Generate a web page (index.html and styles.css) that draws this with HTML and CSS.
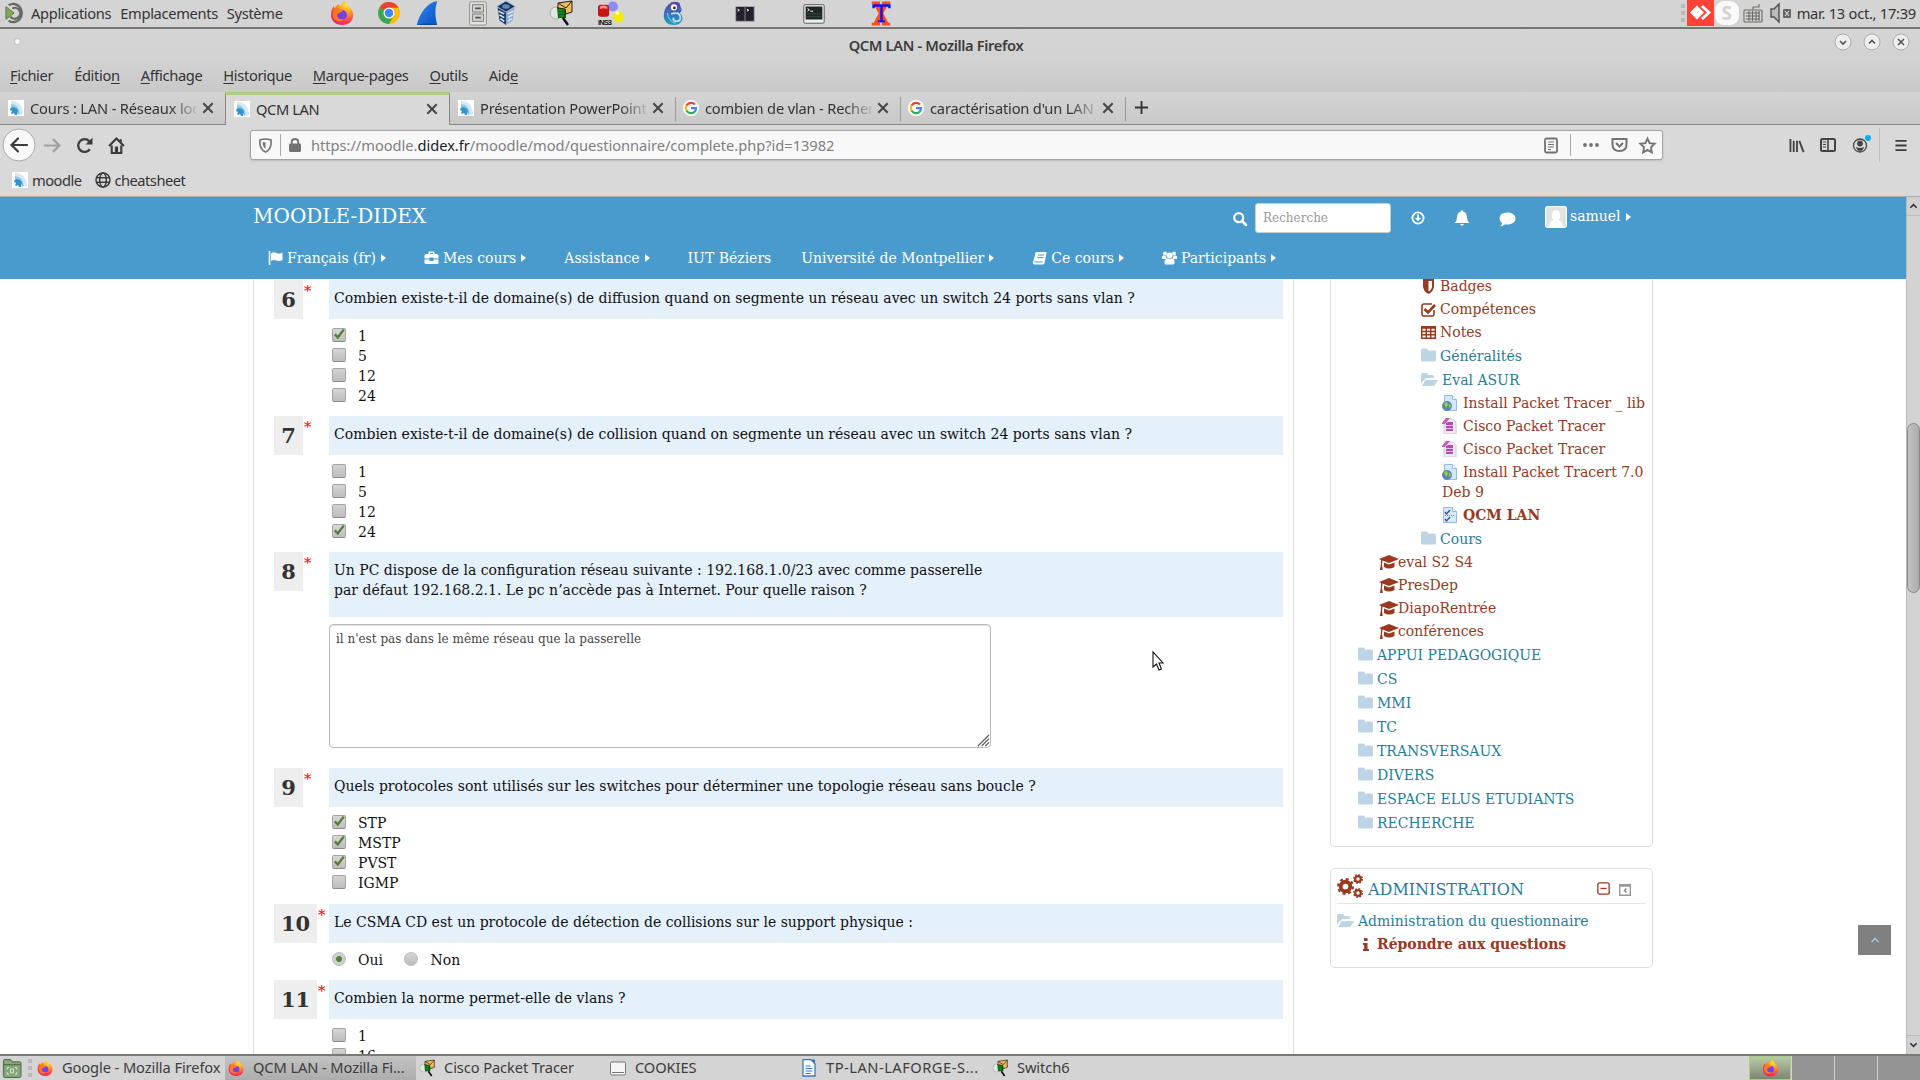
FILE: index.html
```html
<!DOCTYPE html>
<html lang="fr">
<head>
<meta charset="utf-8">
<title>QCM LAN</title>
<link rel="stylesheet" href="styles.css">
</head>
<body>
<svg class="defs" width="0" height="0" aria-hidden="true">
  <defs>
    <radialGradient id="fxg" cx=".7" cy=".15" r="1"><stop offset="0" stop-color="#ffe63b"/><stop offset=".4" stop-color="#ff9020"/><stop offset=".7" stop-color="#ff3d4d"/><stop offset="1" stop-color="#e4137c"/></radialGradient>
    <linearGradient id="wsg" x1="0" y1="0" x2="1" y2="1"><stop offset="0" stop-color="#2f8bf5"/><stop offset="1" stop-color="#0a4fc0"/></linearGradient>
    <linearGradient id="chg" x1="0" y1="0" x2="0" y2="1"><stop offset="0" stop-color="#5f3fae"/><stop offset="1" stop-color="#14a5c4"/></linearGradient>
  </defs>
  <symbol id="firefox" viewBox="0 0 24 26"><path d="M14 1c3 2 3 4 4 5 4 3 6 7 5 11-1 5-5 8-11 8S1 21 1 15c0-4 1-7 3-9 0 1 0 2 1 2 1-2 2-3 4-4 1 1 1 2 2 2 1-3 2-4 3-5z" fill="url(#fxg)"/><circle cx="12" cy="15" r="5" fill="#7542e5"/><path d="M5 9c3-2 6 0 8 2-2 2-5 1-6 4 0 4 4 5 7 4-3 4-9 3-11-2-1-3 0-6 2-8z" fill="#ff7a1c"/></symbol>
  <symbol id="chrome" viewBox="0 0 24 24"><circle cx="12" cy="12" r="11" fill="#fbbc05"/><path d="M12 12 2.500 6.500A11 11 0 0 1 21.600 6.700H12z" fill="#ea4335"/><path d="M2.500 6.500A11 11 0 0 0 12 23l5-8.500L12 12z" fill="#34a853"/><circle cx="12" cy="12" r="5.500" fill="#fff"/><circle cx="12" cy="12" r="4.300" fill="#4285f4"/></symbol>
  <symbol id="moodlefav" viewBox="0 0 16 16"><path fill="#fff" d="M0 0h16v16H0z"/><path d="M3 1q11 0 12 13l-3 1Q13 5 3 4z" fill="#d3e9f5"/><path d="M3 4q8 0 9 10l-2 1Q10 7 3 7z" fill="#93c8e5"/><path d="M4 7q5 0 6 4l-1 4H7l-1-2-2 1-1-1 1-2-2-1q0-2 2-3z" fill="#3394cc"/></symbol>
  <symbol id="google" viewBox="0 0 16 16"><circle cx="8" cy="8" r="8" fill="#fff"/><g fill="none" stroke-width="2.200"><path d="M12 4.600A5.200 5.200 0 0 0 3.500 5.600" stroke="#ea4335"/><path d="M3.500 5.600a5.200 5.200 0 0 0 0 4.800" stroke="#fbbc05"/><path d="M3.500 10.400a5.200 5.200 0 0 0 8 1.500" stroke="#34a853"/><path d="M11.500 11.900A5 5 0 0 0 13 8.200H8" stroke="#4285f4"/></g></symbol>
  <symbol id="close" viewBox="0 0 12 12"><path d="M2 2l8 8M10 2l-8 8" stroke="#474747" stroke-width="1.800" fill="none"/></symbol>
  <symbol id="tracer" viewBox="0 0 24 26"><circle cx="7" cy="13" r="6" fill="#e4e7df" stroke="#aaa"/><path d="M8 7h9v11H9z" fill="#0c5a12"/><path d="M9 10h6M9 13h6M10 16h5" stroke="#23b62c"/><path d="M9 3l14-2v11l-6 2-1-5-7-1z" fill="#f0ba55" stroke="#222"/><path d="M9 3l8 5 6-7" fill="none" stroke="#222"/><path d="M14 18l5 7" stroke="#111" stroke-width="2.500"/></symbol>
  <symbol id="folder" viewBox="0 0 15 14"><path d="M0 2Q0 0 1.500 0h4Q7 0 7 2h6.500Q15 2 15 3.500v8Q15 13 13.500 13h-12Q0 13 0 11.500z" fill="#bdd4e5"/></symbol>
  <symbol id="folderopen" viewBox="0 0 17 14"><path d="M0 11V2Q0 0 1.500 0h4Q7 0 7 2h4.500Q13 2 13 3.500V5H5.500L2 8z" fill="#bdd4e5"/><path d="M1 13l3.500-6H17l-3 5q-.5 1-1.500 1z" fill="#bdd4e5"/></symbol>
  <symbol id="grad" viewBox="0 0 20 15"><path d="M10 0l10 4-10 4L3.500 5.500 3 10l.8 5H.8L1.800 10 2 5 0 4z" fill="#983920"/><path d="M5 7.500l5 2 5.500-2V12q-5.500 3-10.500 0z" fill="#983920"/></symbol>
  <symbol id="urlfile" viewBox="0 0 16 16"><path d="M2.500.5h8l4 4v11h-12z" fill="#d3e8fb" stroke="#92bbe6"/><path d="M10.500.5v4h4" fill="#fff" stroke="#92bbe6"/><circle cx="5" cy="11" r="5" fill="#5685bd"/><path d="M2 8l3-1 1 3-2 3zM7 8l2 3-2 3z" fill="#a3cf28"/></symbol>
  <symbol id="pubfile" viewBox="0 0 16 16"><path d="M2 3l2-2h7l3 3v12H2z" fill="#f1e9f5" stroke="#ccc"/><path d="M0 5l4-5h4L3 6H0z" fill="#c45bb9"/><path d="M4 5l2-1h5v9H4z" fill="#b14fae"/><path d="M4 7.500h7M4 10.500h7" stroke="#e6bde2"/></symbol>
  <symbol id="quizfile" viewBox="0 0 16 16"><path d="M1.500.5h9l4 4v11h-13z" fill="#d7eafc" stroke="#92bbe6"/><path d="M10.500.5v4h4" fill="#fff" stroke="#92bbe6"/><path d="M3 5l1.500 2L8 3M3 12l1.500 2L8 10" fill="none" stroke="#334cae" stroke-width="1.400"/><path d="M3 8.500h10" stroke="#e06060" stroke-dasharray="1 1"/></symbol>
  <symbol id="gear" viewBox="0 0 16 16"><g fill="none" stroke="#983920"><circle cx="8" cy="8" r="4.500" stroke-width="3.600"/><circle cx="8" cy="8" r="7" stroke-width="2" stroke-dasharray="2.750 2.750"/></g></symbol>
</svg>

<header class="panel">
  <svg class="i-mate" viewBox="0 0 22 24"><g fill="none" stroke="#666b60" stroke-width="2.600"><path d="M4 3.500A9.500 10 0 1 1 4 20.500"/><path d="M8 7a6 6 0 1 1-2 9"/></g><path d="M1 5l9 7-9 7z" fill="#82a559" stroke="#587538"/></svg>
  <span class="pm">Applications</span><span class="pm">Emplacements</span><span class="pm">Système</span>
  <div class="launch">
    <svg class="li l1"><use href="#firefox"/></svg>
    <svg class="li l2"><use href="#chrome"/></svg>
    <svg class="li l3" viewBox="0 0 24 28"><path d="M1 27C4 14 12 3 23 1c-3 9-2 18 0 26z" fill="url(#wsg)"/><path d="M1 27q12-4 22 0z" fill="#08489f"/></svg>
    <svg class="li l4" viewBox="0 0 24 28"><rect x="3" y="2" width="18" height="25" rx="1.500" fill="#e2e3df" stroke="#8b8c88"/><path d="M6 5h12v8H6zM6 15h12v8H6z" fill="#cfd1cc" stroke="#777"/><path d="M9 9h6M9 19h6" stroke="#555" stroke-width="2"/></svg>
    <svg class="li l5" viewBox="0 0 24 28"><path d="M3 8l9 4v15l-7-5z" fill="#22406f"/><path d="M12 12l9-4-2 14-7 5z" fill="#8aa8d1"/><path d="M12 1l10 6-10 6L2 7z" fill="#16325f" stroke="#a9c1e2"/><path d="M4 12l6 3M5 16l5 3M6 20l4 3M14 15l6-3M14 19l5-3M14 23l4-3" stroke="#e5eef9" stroke-width="1.600"/><ellipse cx="12" cy="7" rx="4" ry="2.400" fill="#6887b5"/></svg>
    <svg class="li l6"><use href="#tracer"/></svg>
    <svg class="li l7" viewBox="0 0 28 28"><circle cx="16" cy="7" r="5.500" fill="#8b8df5"/><rect y="5" width="12" height="13" rx="3" fill="#c41515"/><path d="M2 7q4-2 8 0v3q-4-2-8 0z" fill="#ee8c8c"/><circle cx="22" cy="18" r="6" fill="#f1ec00"/><circle cx="21" cy="14" r="2.200" fill="#fffbc4"/><text x="0" y="27" class="gns" textLength="15">iNS3</text></svg>
    <svg class="li l8" viewBox="0 0 24 28"><path d="M7 5Q11 0 19 3l1 4q3 5-1 7 4 3 3 7-2 6-9 6Q3 27 2 18 2 9 7 5z" fill="url(#chg)"/><circle cx="13" cy="8" r="3.300" fill="#fff"/><circle cx="13.500" cy="8.500" r="1.400" fill="#222"/><path d="M10 15q9-3 10 4 0 4-5 4-4-1-2-4" fill="none" stroke="#bfe0ef" stroke-width="2"/><path d="M6 14q1 9 9 11" fill="none" stroke="#a0cde6"/></svg>
    <svg class="li l9" viewBox="0 0 24 28"><path d="M2 7h20v16H2z" fill="#25202f" stroke="#aaa"/><path d="M12 7v16" stroke="#888"/><path d="M4 10l2 1-2 1M14 10l2 1-2 1" stroke="#fff" fill="none"/></svg>
    <svg class="li l10" viewBox="0 0 24 28"><rect x="1" y="5" width="22" height="20" rx="1.500" fill="#eee" stroke="#555"/><path d="M3 7h18v14H3z" fill="#1e2624"/><path d="M5 9l2 1.500L5 12M8 12h3" stroke="#fff" fill="none"/><path d="M3 15h18M3 18h18" stroke="#3d4a45"/></svg>
    <svg class="li l11" viewBox="0 0 24 28"><path d="M2 3h20M2 26h20" stroke="#ff4a14" stroke-width="3" stroke-dasharray="9 2"/><path d="M6 3l12 23M18 3L6 26" stroke="#ff4a14" stroke-width="4.500"/><path d="M4 9V6h17v3M12.500 6v17M9 23h7" stroke="#1010f0" stroke-width="2.600" fill="none"/></svg>
  </div>
  <div class="tray">
    <i class="grip"></i>
    <svg class="anyd" viewBox="0 0 27 27"><path fill="#fd4237" d="M0 0h27v27H0z"/><path d="M3 13.500l7-7 7 7-7 7zM14 8l2-2 8 7.500-8 7.500-2-2 6-5.500z" fill="#fff"/></svg>
    <span class="skype">S</span>
    <svg class="kbd" viewBox="0 0 20 20"><g fill="none" stroke="#6a6b68" stroke-width="1.100"><rect x="1" y="7" width="18" height="12" rx="1"/><path d="M3 10h14M3 13h14M3 16h14M6 8v10M9.500 8v10M13 8v10M16 8v10M10 7V4h6V1"/></g></svg>
    <svg class="snd" viewBox="0 0 22 20"><path d="M1 6h3l5-5v18l-5-5H1z" fill="#bbb" stroke="#555" stroke-width="1.500"/><rect x="13" y="6" width="8" height="9" rx="1" fill="#666"/><path d="M15 8l4 5M19 8l-4 5" stroke="#eee"/></svg>
    <span class="clock">mar. 13 oct., 17:39</span>
  </div>
</header>

<section class="chrome">
  <div class="titlebar"><i class="dot"></i><b>QCM LAN - Mozilla Firefox</b>
    <div class="wbs">
      <svg class="wb" viewBox="0 0 18 18"><circle cx="9" cy="9" r="8" fill="#eee" stroke="#aaa"/><path d="M6 8l3 3 3-3" stroke="#555" stroke-width="1.600" fill="none"/></svg>
      <svg class="wb" viewBox="0 0 18 18"><circle cx="9" cy="9" r="8" fill="#eee" stroke="#aaa"/><path d="M6 10.500l3-3 3 3" stroke="#555" stroke-width="1.600" fill="none"/></svg>
      <svg class="wb" viewBox="0 0 18 18"><circle cx="9" cy="9" r="8" fill="#eee" stroke="#aaa"/><path d="M6 6l6 6M12 6l-6 6" stroke="#555" stroke-width="1.600" fill="none"/></svg>
    </div>
  </div>
  <nav class="menubar"><span><u>F</u>ichier</span><span>Éditio<u>n</u></span><span><u>A</u>ffichage</span><span><u>H</u>istorique</span><span><u>M</u>arque-pages</span><span><u>O</u>utils</span><span>Aid<u>e</u></span></nav>
  <div class="tabs">
    <div class="tab"><svg class="fav"><use href="#moodlefav"/></svg><span class="tt">Cours : LAN - Réseaux loc</span><svg class="tx"><use href="#close"/></svg></div>
    <div class="tab active"><svg class="fav"><use href="#moodlefav"/></svg><span class="tt">QCM LAN</span><svg class="tx"><use href="#close"/></svg></div>
    <div class="tab"><svg class="fav"><use href="#moodlefav"/></svg><span class="tt">Présentation PowerPoint</span><svg class="tx"><use href="#close"/></svg></div>
    <div class="tab sep"><svg class="fav"><use href="#google"/></svg><span class="tt">combien de vlan - Recher</span><svg class="tx"><use href="#close"/></svg></div>
    <div class="tab sep"><svg class="fav"><use href="#google"/></svg><span class="tt">caractérisation d'un LAN</span><svg class="tx"><use href="#close"/></svg></div>
    <div class="newtab sep"><svg viewBox="0 0 16 16"><path d="M8 1v14M1 8h14" stroke="#333" stroke-width="2"/></svg></div>
  </div>
  <div class="nav">
    <svg class="back" viewBox="0 0 34 34"><circle cx="17" cy="17" r="16" fill="#f9f9f9" stroke="#aaa"/><path d="M25 17H10M16 10.500L9.500 17l6.500 6.500" fill="none" stroke="#3c3c3c" stroke-width="2.200" stroke-linecap="round"/></svg>
    <svg class="nb fwd" viewBox="0 0 16 16"><path d="M0 8h14M8.500 2l6 6-6 6" fill="none" stroke="#a0a0a0" stroke-width="2"/></svg>
    <svg class="nb rel" viewBox="0 0 16 16"><path d="M13 11.500A6 6 0 1 1 12.500 4" fill="none" stroke="#3c3c3c" stroke-width="2.200"/><path d="M15.500.5V7H9z" fill="#3c3c3c"/></svg>
    <svg class="nb home" viewBox="0 0 16 16"><path d="M1 8.500L8 1.500l7 7M3.500 8v7h9V8M12 2v3" fill="none" stroke="#3c3c3c" stroke-width="2"/><path d="M6.500 9h3v6h-3z" fill="#3c3c3c"/></svg>
    <div class="url">
      <svg class="shield" viewBox="0 0 14 16"><path d="M1 2q6-2 12 0 1 10-6 13Q0 12 1 2z" fill="none" stroke="#737373" stroke-width="1.800"/><path d="M7 4.500v7Q4 10 4 4.500z" fill="#737373"/></svg>
      <i class="vr"></i>
      <svg class="lock" viewBox="0 0 13 15"><rect y="6" width="13" height="9" rx="1.500" fill="#737373"/><path d="M3 7V4a3.500 3 0 0 1 7 0v3" fill="none" stroke="#737373" stroke-width="2"/></svg>
      <span class="addr">https://moodle.<em>didex.fr</em>/moodle/mod/questionnaire/complete.php?id=13982</span>
      <svg class="reader" viewBox="0 0 14 16"><rect x="1" y="1" width="12" height="14" rx="1.500" fill="none" stroke="#737373" stroke-width="1.800"/><path d="M4 4.500h6M4 7h6M4 9.500h6M4 12h3" stroke="#737373"/></svg>
      <i class="vr v2"></i>
      <svg class="dots" viewBox="0 0 16 4"><g fill="#737373"><circle cx="2" cy="2" r="1.900"/><circle cx="8" cy="2" r="1.900"/><circle cx="14" cy="2" r="1.900"/></g></svg>
      <svg class="pocket" viewBox="0 0 16 16"><path d="M1 2h14v5q0 7-7 7t-7-7z" fill="none" stroke="#737373" stroke-width="2"/><path d="M4.500 6L8 9.500 11.500 6" fill="none" stroke="#737373" stroke-width="2"/></svg>
      <svg class="star" viewBox="0 0 16 16"><path d="M8 1.500l2 4.300 4.700.6-3.400 3.300.8 4.800L8 12.200l-4.100 2.300.8-4.800L1.300 6.400 6 5.800z" fill="none" stroke="#737373" stroke-width="1.800"/></svg>
    </div>
    <div class="tools">
      <svg class="t1" viewBox="0 0 16 16"><path d="M1 1v14M4.500 3v12M8 3v12M10.500 3l4.500 12" stroke="#444" stroke-width="2"/></svg>
      <svg class="t2" viewBox="0 0 16 16"><rect x="1" y="2" width="14" height="12" rx="1.500" fill="none" stroke="#444" stroke-width="2"/><path d="M8 2v12" stroke="#444" stroke-width="1.600"/><path d="M3 5h3M3 7.500h3M3 10h3" stroke="#444"/></svg>
      <svg class="t3" viewBox="0 0 18 18"><circle cx="7" cy="10.500" r="6.500" fill="none" stroke="#444" stroke-width="1.300"/><circle cx="7" cy="8.500" r="2.900" fill="#444"/><path d="M3 12q4 2 8 0-1 4-4 4t-4-4z" fill="#444"/><circle cx="15" cy="3" r="3" fill="#06aef5"/></svg>
      <i class="vr v3"></i>
      <svg class="t4" viewBox="0 0 12 14"><path d="M0 2h12M0 7h12M0 12h12" stroke="#3c3c3c" stroke-width="2"/></svg>
    </div>
  </div>
  <div class="marks"><svg class="fav"><use href="#moodlefav"/></svg><span>moodle</span><svg class="globe" viewBox="0 0 16 16"><g fill="none" stroke="#3c3c3c" stroke-width="1.500"><circle cx="8" cy="8" r="7"/><ellipse cx="8" cy="8" rx="3.300" ry="7"/><path d="M1 5.700h14M1 10.300h14"/></g></svg><span>cheatsheet</span></div>
</section>

<main class="view">
  <div class="page">
    <div class="mhead">
      <div class="mrow1">
        <span class="brand">MOODLE-DIDEX</span>
        <svg class="srch" viewBox="0 0 14 14"><circle cx="5.700" cy="5.700" r="4.500" fill="none" stroke="#fff" stroke-width="2.200"/><path d="M9 9l4 4" stroke="#fff" stroke-width="2.500" stroke-linecap="round"/></svg>
        <span class="sinput">Recherche</span>
        <svg class="h1" viewBox="0 0 14 14"><circle cx="7" cy="7" r="5.600" fill="none" stroke="#fff" stroke-width="1.800"/><path d="M6 3.500h2V7h2.200L7 10.200 3.800 7H6z" fill="#fff"/></svg>
        <svg class="h2" viewBox="0 0 16 16"><path d="M8 0q1 0 1 1.500 4 1 4 6 0 3.500 2.500 5.500H.5Q3 11 3 7.500q0-5 4-6Q7 0 8 0zM6 14h4q-2 3.500-4 0z" fill="#fff"/></svg>
        <svg class="h3" viewBox="0 0 17 15"><path d="M8.500 1C13 1 16.500 3.500 16.500 7S13 13 8.500 13q-1.500 0-2.500-.3Q4 14.500 1 15q2-1.500 2-3.500Q.5 9.500.5 7 .5 1 8.500 1z" fill="#fff"/></svg>
        <svg class="ava" viewBox="0 0 22 22"><rect width="22" height="22" rx="3" fill="#fff"/><rect x="1" y="1" width="20" height="20" rx="2" fill="#e3e3e3"/><path d="M4 21q0-6 5-7-3-2-2-6 1-4 4-4t4 4q1 4-2 6 5 1 5 7z" fill="#fff"/></svg>
        <span class="user">samuel<i class="car"></i></span>
      </div>
      <nav class="mnav">
        <a><svg class="ic" viewBox="0 0 14 14"><path d="M1 0v14" stroke="#fff" stroke-width="1.500"/><path d="M2.500 2.500Q5 .5 8 2t6-.5V9q-3 1.500-6 .5T2.500 10z" fill="#fff"/></svg>Français (fr)<i class="car"></i></a>
        <a><svg class="ic" viewBox="0 0 14 14"><path d="M0 4.500Q0 3 1.500 3H4V1.500Q4 .5 5 .5h4q1 0 1 1V3h2.500Q14 3 14 4.500V7.500H9v-1H5v1H0zM5.500 3h3V2h-3zM0 8.500h5v1.500h4V8.500h5v3.500Q14 13 12.500 13h-11Q0 13 0 12z" fill="#fff"/></svg>Mes cours<i class="car"></i></a>
        <a>Assistance<i class="car"></i></a>
        <a class="plain">IUT Béziers</a>
        <a>Université de Montpellier<i class="car"></i></a>
        <a><svg class="ic" viewBox="0 0 14 14"><path d="M4 1h9q1.500 0 1 1.500L12 12q-.5 1.500-2 1.500H2Q0 13.500.4 11.500L3 2Q3.200 1 4 1z" fill="#fff"/><path d="M5.500 4h6M5 6.500h6M2 11h8" stroke="#489bcc"/></svg>Ce cours<i class="car"></i></a>
        <a><svg class="ic" viewBox="0 0 15 14"><g fill="#fff"><circle cx="7.500" cy="4.500" r="3"/><circle cx="3" cy="2.500" r="2"/><circle cx="12" cy="2.500" r="2"/><path d="M0 8V5.500Q1.500 4 3.500 5L4.500 8zM15 8V5.500Q13.500 4 11.500 5L10.500 8zM2.500 12V10q1-3 3-2.500 2 1 4 0 2.500-.5 3 2.500v2q0 1.500-1.500 1.500H4q-1.500 0-1.500-1.500z"/></g></svg>Participants<i class="car"></i></a>
      </nav>
    </div>
    <div class="cols">
      <div class="quiz">
        <div class="q"><div class="num"><b>6</b><sup>*</sup></div><div class="body"><p class="qt">Combien existe-t-il de domaine(s) de diffusion quand on segmente un réseau avec un switch 24 ports sans vlan ?</p>
          <ul><li class="on">1</li><li>5</li><li>12</li><li>24</li></ul></div></div>
        <div class="q"><div class="num"><b>7</b><sup>*</sup></div><div class="body"><p class="qt">Combien existe-t-il de domaine(s) de collision quand on segmente un réseau avec un switch 24 ports sans vlan ?</p>
          <ul><li>1</li><li>5</li><li>12</li><li class="on">24</li></ul></div></div>
        <div class="q q8"><div class="num"><b>8</b><sup>*</sup></div><div class="body"><p class="qt two">Un PC dispose de la configuration réseau suivante : 192.168.1.0/23 avec comme passerelle<br>par défaut 192.168.2.1. Le pc n’accède pas à Internet. Pour quelle raison ?</p>
          <div class="ta">il n'est pas dans le même réseau que la passerelle<svg viewBox="0 0 12 12"><path d="M0 12L12 0M4 12l8-8M8 12l4-4" stroke="#555" stroke-width="1.200"/></svg></div></div></div>
        <div class="q q9"><div class="num"><b>9</b><sup>*</sup></div><div class="body"><p class="qt">Quels protocoles sont utilisés sur les switches pour déterminer une topologie réseau sans boucle ?</p>
          <ul><li class="on">STP</li><li class="on">MSTP</li><li class="on">PVST</li><li>IGMP</li></ul></div></div>
        <div class="q q10"><div class="num wide"><b>10</b><sup>*</sup></div><div class="body"><p class="qt">Le CSMA CD est un protocole de détection de collisions sur le support physique :</p>
          <ul class="radio"><li class="on">Oui</li><li>Non</li></ul></div></div>
        <div class="q"><div class="num wide"><b>11</b><sup>*</sup></div><div class="body"><p class="qt">Combien la norme permet-elle de vlans ?</p>
          <ul><li>1</li><li>16</li></ul></div></div>
      </div>
      <aside class="side">
        <div class="block tree">
          <div class="r d4"><svg class="s15" viewBox="0 0 15 15"><path d="M2 0h11v7q0 5-5.500 8Q2 12 2 7z" fill="#983920"/><path d="M4 2h3.500v10.500Q4 10 4 7z" fill="#983920"/><path d="M7.500 2H11v5q0 3.500-3.500 5.500z" fill="#fff"/></svg>Badges</div>
          <div class="r d4"><svg class="s15" viewBox="0 0 15 15"><path d="M13 8v4q0 2-2 2H3q-2 0-2-2V4q0-2 2-2h8" fill="none" stroke="#983920" stroke-width="1.600"/><path d="M3.500 7L7 10.500 14 3" fill="none" stroke="#983920" stroke-width="2.600"/></svg>Compétences</div>
          <div class="r d4"><svg class="s15" viewBox="0 0 15 15"><path d="M.7 1.700h13.600v11.600H.7zM0 3h15M1 6.500h13M1 9.700h13M5.300 3v10M9.700 3v10" fill="none" stroke="#983920" stroke-width="1.500"/></svg>Notes</div>
          <div class="r f d4"><svg class="s15"><use href="#folder"/></svg>Généralités</div>
          <div class="r f d4"><svg class="s17"><use href="#folderopen"/></svg>Eval ASUR</div>
          <div class="r d5"><svg class="s16"><use href="#urlfile"/></svg>Install Packet Tracer _ lib</div>
          <div class="r d5"><svg class="s16"><use href="#pubfile"/></svg>Cisco Packet Tracer</div>
          <div class="r d5"><svg class="s16"><use href="#pubfile"/></svg>Cisco Packet Tracer</div>
          <div class="r d5"><svg class="s16"><use href="#urlfile"/></svg>Install Packet Tracert 7.0</div>
          <div class="r d5 cont">Deb 9</div>
          <div class="r d5 bold"><svg class="s16"><use href="#quizfile"/></svg>QCM LAN</div>
          <div class="r f d4"><svg class="s15"><use href="#folder"/></svg>Cours</div>
          <div class="r d2"><svg class="s20"><use href="#grad"/></svg>eval S2 S4</div>
          <div class="r d2"><svg class="s20"><use href="#grad"/></svg>PresDep</div>
          <div class="r d2"><svg class="s20"><use href="#grad"/></svg>DiapoRentrée</div>
          <div class="r d2"><svg class="s20"><use href="#grad"/></svg>conférences</div>
          <div class="r f"><svg class="s15"><use href="#folder"/></svg>APPUI PEDAGOGIQUE</div>
          <div class="r f"><svg class="s15"><use href="#folder"/></svg>CS</div>
          <div class="r f"><svg class="s15"><use href="#folder"/></svg>MMI</div>
          <div class="r f"><svg class="s15"><use href="#folder"/></svg>TC</div>
          <div class="r f"><svg class="s15"><use href="#folder"/></svg>TRANSVERSAUX</div>
          <div class="r f"><svg class="s15"><use href="#folder"/></svg>DIVERS</div>
          <div class="r f"><svg class="s15"><use href="#folder"/></svg>ESPACE ELUS ETUDIANTS</div>
          <div class="r f"><svg class="s15"><use href="#folder"/></svg>RECHERCHE</div>
        </div>
        <div class="block admin">
          <div class="ahead"><svg class="cogs" viewBox="0 0 26 24"><use href="#gear" x="0" y="4" width="17" height="17"/><use href="#gear" x="16" y="0" width="10" height="10"/><use href="#gear" x="16" y="14" width="10" height="10"/></svg><span>ADMINISTRATION</span>
            <svg class="mn" viewBox="0 0 13 13"><rect x=".8" y=".8" width="11.400" height="11.400" rx="2" fill="none" stroke="#983920" stroke-width="1.300"/><path d="M3.500 6.500h6" stroke="#983920" stroke-width="1.300"/></svg>
            <svg class="dk" viewBox="0 0 12 12"><path d="M.7.700h10.600v10.600H.7zM.5 2h11" fill="none" stroke="#999" stroke-width="1.400"/><path d="M7.500 4.500L5.500 6.500l2 2" fill="none" stroke="#888" stroke-width="1.500"/></svg></div>
          <div class="r f a1"><svg class="s17"><use href="#folderopen"/></svg>Administration du questionnaire</div>
          <div class="r bold a2"><svg class="inf" viewBox="0 0 6 13"><path d="M1 0h3.500v3H1zM0 5h4.500v6H6v2H0v-2h1.200V7H0z" fill="#983920"/></svg>Répondre aux questions</div>
        </div>
      </aside>
    </div>
  </div>
  <div class="sb"><div class="sbb"><svg viewBox="0 0 10 6"><path d="M1.500 5L5 1.500 8.500 5" fill="none" stroke="#333" stroke-width="1.800"/></svg></div><div class="thumb"></div><div class="sbb dn"><svg viewBox="0 0 10 6"><path d="M1.500 1L5 4.500 8.500 1" fill="none" stroke="#333" stroke-width="1.800"/></svg></div></div>
  <div class="totop"><svg viewBox="0 0 10 6"><path d="M1.500 5L5 1.500 8.500 5" fill="none" stroke="#b4c8d6" stroke-width="1.300"/></svg></div>
  <svg class="cursor" viewBox="0 0 12 20"><path d="M1 1v15l3.500-3 2.500 6 2.500-1-2.500-6H11z" fill="#fff" stroke="#111" stroke-width="1.100"/></svg>
</main>

<footer class="taskbar">
  <svg class="desk" viewBox="0 0 20 20"><path d="M1 2q0-1.500 1.500-1.500h6L10 3h8q1.500 0 1.500 1.500v13q0 2-1.500 2H2.500Q1 19.500 1 17.500z" fill="#86a57b" stroke="#4c6444"/><path d="M1 6h18" stroke="#4c6444"/><path d="M5 11V9h2M13 9h2v2M5 14v2h2M13 16h2v-2M8.500 10.500h3v4h-3z" fill="none" stroke="#dfe9d9"/></svg>
  <i class="grip g2"></i>
  <div class="task"><svg class="ti"><use href="#firefox"/></svg>Google - Mozilla Firefox</div>
  <div class="task cur"><svg class="ti"><use href="#firefox"/></svg>QCM LAN - Mozilla Fi...</div>
  <div class="task"><svg class="ti"><use href="#tracer"/></svg>Cisco Packet Tracer</div>
  <div class="task"><svg class="ti" viewBox="0 0 16 18"><rect x=".5" y="3" width="15" height="13" rx="1.500" fill="#f5f5f5" stroke="#777"/><path d="M2 13.500h12" stroke="#777"/></svg>COOKIES</div>
  <div class="task tp"><svg class="ti" viewBox="0 0 16 18"><path d="M2 .700h8l4 4V17H2z" fill="#fff" stroke="#3f77b5" stroke-width="1.300"/><path d="M10 .500h4v4z" fill="#3f77b5"/><path d="M4.500 7h5M4.500 9.500h7M4.500 12h7M4.500 14.500h5" stroke="#3f77b5"/></svg>TP-LAN-LAFORGE-S...</div>
  <div class="task"><svg class="ti"><use href="#tracer"/></svg>Switch6</div>
  <div class="ws"><div class="w on"><svg><use href="#firefox"/></svg></div><div class="w"></div><div class="w"></div><div class="w"></div></div>
</footer>
</body>
</html>
```
FILE: styles.css
```css
*{box-sizing:border-box}
body{margin:0;width:1920px;height:1080px;overflow:hidden;display:flex;flex-direction:column;background:#d4d4d4;color:#333;font:14.67px/20px "Noto Sans",sans-serif}
svg{display:block;flex:none;overflow:visible}
i{display:block;flex:none}
.defs{position:absolute}
span,a,b{white-space:nowrap}

.panel{height:29px;flex:none;display:flex;align-items:center;padding:0 4px 2px 5px;background:#d4d4d4;border-bottom:2px solid #777}
.i-mate{width:20px;height:22px;margin-right:6px}
.pm{margin-right:9px;letter-spacing:-.33px}
.launch{display:flex;align-items:center}
.li{width:24px;height:26px}
.l1{margin-left:38px}.l2{margin-left:23px}.l3{margin-left:14px}.l4{margin-left:27px}.l5{margin-left:4px}.l6{margin-left:31px}
.l7{margin-left:24px;width:28px}.l8{margin-left:36px}.l9{margin-left:48px}.l10{margin-left:45px}.l11{margin-left:43px}
.gns{font:bold 8px "Liberation Sans",sans-serif;fill:#111}
.tray{margin-left:auto;display:flex;align-items:center}
.grip{width:4px;height:18px;background:repeating-linear-gradient(#bbb 0 4px,transparent 4px 7px)}
.anyd{width:27px;height:27px;margin-left:2px}
.skype{width:24px;height:24px;border-radius:9px;background:#fafafa;color:#d4d4d4;font:bold 19px/24px "Noto Sans",sans-serif;text-align:center;margin-left:1px}
.kbd{width:20px;height:20px;margin-left:4px}
.snd{width:22px;height:20px;margin:0 5px 0 7px}
.clock{letter-spacing:-.26px}

.chrome{height:168px;flex:none;display:flex;flex-direction:column;background:#d9d9d9;border-bottom:1px solid #aaa}
.titlebar{height:31px;display:flex;align-items:center;background:linear-gradient(#d5d5d5,#d2d2d2);padding:0 10px 0 14px}
.titlebar b{flex:1;text-align:center;color:#3c3c3c;font-weight:600;letter-spacing:-.36px;padding-left:17px}
.dot{width:7px;height:7px;border-radius:50%;background:#f8f8f8;border:1px solid #bbb;margin-top:-7px}
.wbs{display:flex;gap:11px;margin-top:-6px}
.wb{width:18px;height:18px}
.menubar{height:32px;display:flex;align-items:center;gap:21px;padding:0 0 2px 10px;letter-spacing:-.35px;background:linear-gradient(#d2d2d2,#c9c9c9)}
.menubar u{text-underline-offset:2px}
.tabs{height:33px;display:flex;background:linear-gradient(#d4d4d4,#c9c9c9);border-bottom:1px solid #888}
.tab{width:225px;height:32px;display:flex;align-items:center;padding:0 10px 0 8px}
.active{background:#d9d9d9;height:33px;border:1px solid #888;border-top:3px solid #a9cc86;border-bottom:0;padding:0 10px 3px 8px}
.fav{width:16px;height:16px;margin-right:6px}
.tt{flex:1;overflow:hidden;letter-spacing:-.18px;-webkit-mask-image:linear-gradient(90deg,#000 84%,transparent 102%);mask-image:linear-gradient(90deg,#000 84%,transparent 102%)}
.active .tt{-webkit-mask-image:none;mask-image:none;letter-spacing:-.4px}
.tx{width:14px;height:14px;margin-left:4px}
.sep{background:linear-gradient(#999,#999) 0 60%/1px 24px no-repeat}
.newtab{padding:8px 0 0 9px}
.newtab svg{width:15px;height:15px}
.nav{height:40px;display:flex;align-items:center;padding:0 13px 0 2px}
.back{width:34px;height:34px}
.nb{width:17px;height:17px}
.fwd{margin-left:8px}.rel{margin-left:15px}.home{margin-left:15px}
.url{width:1413px;height:30px;margin-left:125px;background:#f8f8f8;border:1px solid #a3a3a3;border-radius:3px;box-shadow:0 1px 2px #bbb;display:flex;align-items:center;padding:0 6px 0 8px}
.shield{width:13px;height:15px}
.vr{width:1px;height:22px;background:#aaa;margin:0 8px}
.lock{width:12px;height:14px}
.addr{flex:1;color:#808080;margin-left:10px;letter-spacing:-.03px}
.addr em{font-style:normal;color:#1c1c1c}
.reader{width:14px;height:17px}
.v2{margin:0 12px}
.dots{width:16px;height:4px}
.pocket{width:17px;height:16px;margin-left:12px}
.star{width:17px;height:17px;margin-left:11px}
.tools{margin-left:auto;display:flex;align-items:center}
.t1{width:16px;height:15px;margin-right:15px}.t2{width:16px;height:16px;margin-right:17px}.t3{width:18px;height:18px;margin-top:-3px}
.v3{height:34px;background:#c0c0c0;margin:0 15px 0 8px}
.t4{width:12px;height:13px}
.marks{height:31px;display:flex;align-items:center;padding:0 0 2px 12px;letter-spacing:-.5px}
.marks .fav{margin-right:4px}
.globe{width:16px;height:16px;margin:0 4px 0 13px}

.view{height:857px;flex:none;display:flex;position:relative;overflow:hidden;background:#fff;font:14px/20px "DejaVu Serif",serif;color:#111}
.page{width:1906px;display:flex;flex-direction:column}
.mhead{height:82px;flex:none;background:#489bcc;color:#fff;padding-left:253px}
.mrow1{height:41px;display:flex;align-items:center}
.brand{font-size:20px;width:980px;padding-bottom:3px}
.srch{width:14px;height:14px;margin:2px 8px 0 0}
.sinput{width:136px;height:30px;border:1px solid #ccc;border-radius:3px;background:#fff;color:#999;font-size:12px;line-height:29px;padding-left:7px;margin-top:1px}
.h1{width:14px;height:14px;margin-left:20px}.h2{width:16px;height:16px;margin-left:29px}.h3{width:17px;height:16px;margin-left:29px;margin-top:3px}
.ava{width:22px;height:22px;margin:-2px 3px 0 29px}
.user{padding-bottom:4px}
.car{display:inline-block;border:4.500px solid transparent;border-left:5px solid #fff;border-right:0;margin-left:5px}
.mnav{height:40px;display:flex;align-items:center;padding-left:15px}
.mnav a{display:flex;align-items:center;margin-right:38px}
.mnav .plain{margin-right:30px}
.ic{width:15px;height:14px;margin-right:4px}
.cols{display:flex;height:775px;overflow:hidden}
.quiz{width:1041px;height:775px;margin-left:253px;border:solid #ddd;border-width:0 1px;padding:1px 10px 0 20px;overflow:hidden}
.q{display:flex;height:136px}
.num{width:55px;display:flex;align-items:flex-start}
.num b{width:29px;height:39px;background:#eee;text-align:center;font-size:21px;line-height:39px;color:#333}
.num.wide b{width:43px}
.num sup{color:#f00;font-size:15px;line-height:22px;margin-left:1px}
.body{flex:1}
.qt{margin:0;height:39px;background:#e4f0fa;padding:8px 5px;white-space:nowrap}
.two{height:65px}
.q8{height:216px}
ul{list-style:none;margin:0;padding:7px 0 0 2.500px}
.q9 ul{padding-top:6px}
li{height:20px;display:flex;align-items:center}
li::before{content:"";width:12px;height:12px;margin:-2px 12.500px 0 0;border-radius:2px;border:1px solid #a5a5a5;border-bottom-color:#8c8c8c;background:linear-gradient(#d4d4d4,#bdbdbd)}
li.on::before{background:url("data:image/svg+xml,%3Csvg xmlns='http://www.w3.org/2000/svg' viewBox='0 0 10 10'%3E%3Cpath d='M1.500 4.500 4 7 9 .5' fill='none' stroke='%23587f3a' stroke-width='2'/%3E%3C/svg%3E"),linear-gradient(#d8d8d8,#bdbdbd)}
.q10{height:76px}
.radio{display:flex;gap:22px}
.radio li::before{border-radius:50%;border-color:#bbb}
.radio li.on::before{background:radial-gradient(circle,#587f3a 0 2.500px,#cfcfcf 3.500px)}
.radio{gap:21px}
.ta{position:relative;width:662px;height:124px;margin-top:7px;border:1px solid #bbb;border-radius:4px;box-shadow:inset 0 1px 1px #ddd;font-size:12px;color:#444;padding:4px 6px}
.ta svg{position:absolute;right:1px;bottom:1px;width:11px;height:11px}
.side{width:323px;margin-left:36px}
.block{border:1px solid #ddd;border-radius:5px}
.tree{margin-top:-5px;height:573px;border-top:0;padding:.5px 0 0 27px}
.r{height:23px;display:flex;align-items:center;white-space:nowrap;color:#983920}
.f{height:24px;color:#1f7e9a}
.d2{padding-left:21px}.d4{padding-left:63px}.d5{padding-left:84px}
.cont{height:20px;margin-top:-2px;margin-bottom:2px}
.bold{font-weight:bold}
.s15{width:15px;height:15px;margin-right:4px}
.s17{width:17px;height:14px;margin-right:4px}
.s16{width:16px;height:16px;margin-right:5px}
.s20{width:20px;height:15px;margin-right:-1px}
.admin{margin-top:21px;height:100px;padding:0 6px}
.ahead{height:35px;border-bottom:1px solid #e5e5e5;display:flex;align-items:center;font-size:16px;color:#1f7e9a;padding-top:5px}
.cogs{width:26px;height:24px;margin:-5px 5px 0 0}
.ahead span{width:229px;padding-top:2px}
.mn{width:13px;height:13px}
.dk{width:12px;height:12px;margin-left:9px;margin-top:2px}
.a1{margin-top:5px}
.a2{padding:0 0 1px 26px}
.inf{width:6px;height:13px;margin-right:8px}
.sb{width:14px;background:#d3d3d3;border-left:1px solid #bbb;display:flex;flex-direction:column}
.sbb{height:19px;background:#d0d0d0;border-bottom:1px solid #bbb;display:flex;align-items:center;justify-content:center}
.sbb svg{width:9px;height:6px}
.thumb{height:170px;margin-top:207px;border-radius:7px;border:1px solid #888;background:linear-gradient(90deg,#c4c4c4,#aaa)}
.dn{margin-top:auto;border:0;border-top:1px solid #bbb}
.totop{position:absolute;left:1858px;top:728px;width:33px;height:30px;background:#808080;display:flex;align-items:center;justify-content:center}
.totop svg{width:10px;height:6px}
.cursor{position:absolute;left:1152px;top:454px;width:12px;height:20px}

.taskbar{height:26px;flex:none;display:flex;align-items:center;background:#d4d4d4;border-top:2px solid #777b74;padding-left:2px}
.desk{width:20px;height:19px}
.g2{margin:0 2px 0 6px}
.task{width:191px;height:24px;display:flex;align-items:center;padding:0 0 2px 3px;color:#3c3c3c;white-space:nowrap;flex:none;letter-spacing:-.1px}
.tp{letter-spacing:.5px}
.cur{background:linear-gradient(#c3c3c3,#adadad)}
.ti{width:16px;height:18px;margin:2px 9px 0 0}
.ws{margin-left:auto;display:flex;gap:1px}
.w{width:42px;height:24px;background:#949494}
.w.on{background:linear-gradient(#b9cba5,#7d8672);border:1px solid #a9cc86;display:flex;align-items:center;justify-content:center}
.w svg{width:17px;height:18px}
```
